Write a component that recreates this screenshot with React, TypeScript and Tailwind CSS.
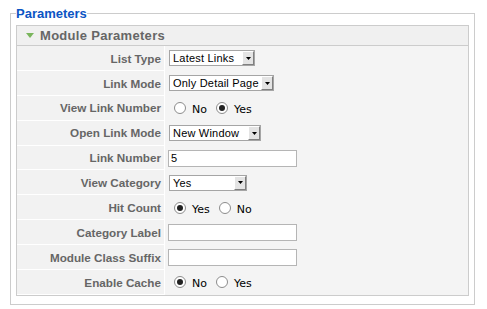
import React from "react";

type Row =
  | { label: string; kind: "select"; value: string; width: number }
  | { label: string; kind: "text"; value: string }
  | { label: string; kind: "radio"; options: string[]; checked: number };

const rows: Row[] = [
  { label: "List Type", kind: "select", value: "Latest Links", width: 86 },
  { label: "Link Mode", kind: "select", value: "Only Detail Page", width: 105 },
  { label: "View Link Number", kind: "radio", options: ["No", "Yes"], checked: 1 },
  { label: "Open Link Mode", kind: "select", value: "New Window", width: 92 },
  { label: "Link Number", kind: "text", value: "5" },
  { label: "View Category", kind: "select", value: "Yes", width: 78 },
  { label: "Hit Count", kind: "radio", options: ["Yes", "No"], checked: 0 },
  { label: "Category Label", kind: "text", value: "" },
  { label: "Module Class Suffix", kind: "text", value: "" },
  { label: "Enable Cache", kind: "radio", options: ["No", "Yes"], checked: 0 },
];

const FakeSelect = ({ value, width }: { value: string; width: number }) => (
  <div
    className="flex h-[16px] items-stretch border border-[#a5a5a5] bg-white"
    style={{ width }}
  >
    <span className="flex-1 truncate pl-[3px] text-[11px] leading-[14px] tracking-[0.2px] text-black">
      {value}
    </span>
    <span className="flex w-[12px] items-center justify-center border-t border-l border-t-white border-l-white border-b-[#808080] border-r-[#808080] border-b border-r bg-[#e4e4e4]">
      <svg width="5" height="3" viewBox="0 0 5 3">
        <path d="M0 0h5L2.5 3z" fill="#000" />
      </svg>
    </span>
  </div>
);

const Radio = ({ on }: { on: boolean }) => (
  <span className="flex h-[12px] w-[12px] items-center justify-center rounded-full border border-[#8c8c8c] bg-white">
    {on && <span className="h-[6px] w-[6px] rounded-full bg-[#222]" />}
  </span>
);

export default function App() {
  return (
    <div className="h-[309px] w-[487px] bg-white font-['Liberation_Sans',Arial,sans-serif]">
      <fieldset className="ml-[10px] mt-[6px] w-[465px] border border-[#cccccc] px-[5px] pb-[8px] pt-[4px]">
        <legend className="px-0 text-[13px] font-bold leading-[15px] text-[#0B55C4]">
          Parameters
        </legend>
        <div className="border border-[#cccccc] bg-[#f4f4f4]">
          <div className="flex h-[20px] items-center border-b border-[#cccccc] bg-[#f0f0f0] pl-[9px]">
            <svg width="8" height="5" viewBox="0 0 8 5" className="mr-[6px]">
              <path d="M0 0h8L4 5z" fill="#7ab55c" />
            </svg>
            <span className="text-[13px] font-bold tracking-[0.3px] text-[#666]">
              Module Parameters
            </span>
          </div>
          {rows.map((row, i) => (
            <div key={i} className="flex h-[24.9px]">
              <div className="flex w-[148px] items-center justify-end border-r border-b border-white bg-[#f2f2f2] pr-[3px] pt-[1px] text-[11.7px] font-bold text-[#666]">
                {row.label}
              </div>
              <div className="flex flex-1 items-center pl-[3px]">
                {row.kind === "select" && (
                  <div className="pl-[1px]">
                    <FakeSelect value={row.value} width={row.width} />
                  </div>
                )}
                {row.kind === "text" && (
                  <div className="flex h-[17px] w-[129px] items-center border border-[#b5b5b5] bg-white pl-[2px] text-[11px] text-black">
                    {row.value}
                  </div>
                )}
                {row.kind === "radio" && (
                  <div className="flex items-center pl-[6px] font-['DejaVu_Sans',Verdana,sans-serif] text-[11px] text-black">
                    {row.options.map((opt, j) => (
                      <span key={j} className="flex items-center">
                        <Radio on={row.checked === j} />
                        <span className="ml-[6px] mr-[9px] translate-y-[2px]">{opt}</span>
                      </span>
                    ))}
                  </div>
                )}
              </div>
            </div>
          ))}
        </div>
      </fieldset>
    </div>
  );
}
